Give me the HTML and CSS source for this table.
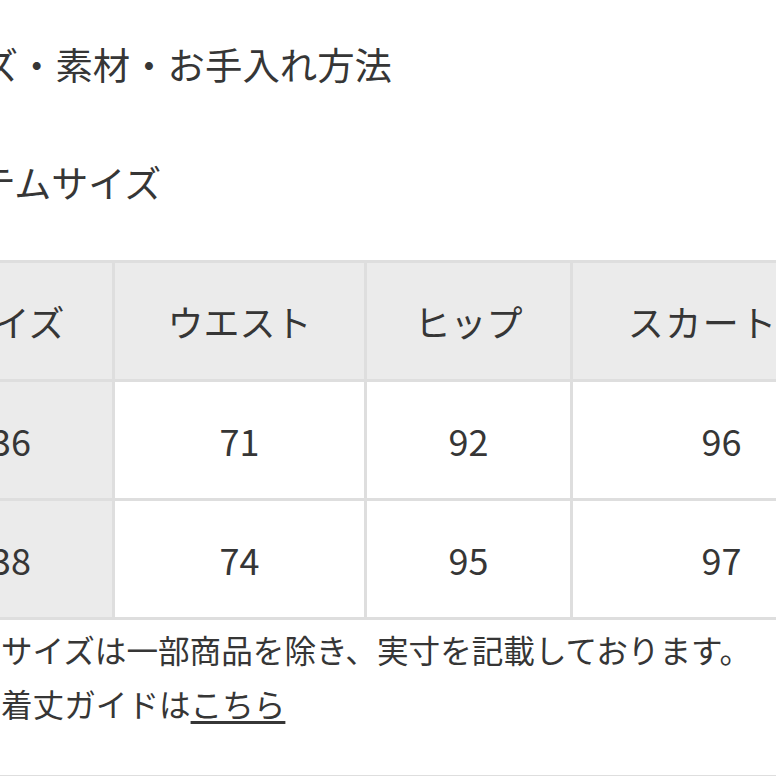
FILE: index.html
```html
<!DOCTYPE html>
<html lang="ja">
<head>
<meta charset="utf-8">
<link rel="stylesheet" href="styles.css">
</head>
<body>
<div class="page">
  <h1 class="title">サイズ・素材・お手入れ方法</h1>
  <h2 class="subtitle">アイテムサイズ</h2>
  <table class="size-table">
    <colgroup>
      <col class="c1"><col class="c2"><col class="c3"><col class="c4">
    </colgroup>
    <tr>
      <th class="head">サイズ</th>
      <th class="head">ウエスト</th>
      <th class="head">ヒップ</th>
      <th class="head wide">スカート丈</th>
    </tr>
    <tr>
      <th class="side">36</th>
      <td>71</td>
      <td>92</td>
      <td>96</td>
    </tr>
    <tr>
      <th class="side">38</th>
      <td>74</td>
      <td>95</td>
      <td>97</td>
    </tr>
  </table>
  <div class="notes">
    <p class="note">サイズは一部商品を除き、実寸を記載しております。</p>
    <p class="note">着丈ガイドは<a class="link" href="#">こちら</a></p>
  </div>
  <div class="rule"></div>
</div>
</body>
</html>
```

FILE: styles.css
```css
html, body {
  margin: 0;
  padding: 0;
  background: #fff;
  overflow: hidden;
}
body {
  font-family: "Noto Sans CJK JP", "Noto Sans", sans-serif;
  color: #363636;
  width: 776px;
  height: 776px;
}
.page {
  margin-left: -93px;
  width: 980px;
}
.title {
  font-size: 37.4px;
  font-weight: 400;
  line-height: 50px;
  margin: 39px 0 0;
}
.subtitle {
  font-size: 37px;
  font-weight: 400;
  line-height: 50px;
  margin: 68px 0 0;
}
.size-table {
  margin-top: 53px;
  border-collapse: collapse;
  table-layout: fixed;
  width: 963px;
}
.c1 { width: 205px; }
.c2 { width: 252px; }
.c3 { width: 206px; }
.c4 { width: 300px; }
.size-table th,
.size-table td {
  border: 3px solid #dedede;
  height: 116px;
  padding: 0;
  text-align: center;
  vertical-align: middle;
  font-size: 36px;
  font-weight: 400;
  color: #363636;
}
.size-table .wide {
  letter-spacing: 1.5px;
}
.size-table .head,
.size-table .side {
  background: #ebebeb;
}
.size-table td {
  background: #fff;
}
.notes {
  margin-left: 94px;
  margin-top: 2px;
}
.note {
  margin: 0;
  font-size: 31.6px;
  line-height: 54px;
}
.link {
  color: #363636;
  text-decoration: underline;
  text-underline-offset: 4px;
}
.rule {
  margin-top: 45px;
  margin-left: 93px;
  width: 776px;
  border-top: 3px solid #dedede;
}
```
